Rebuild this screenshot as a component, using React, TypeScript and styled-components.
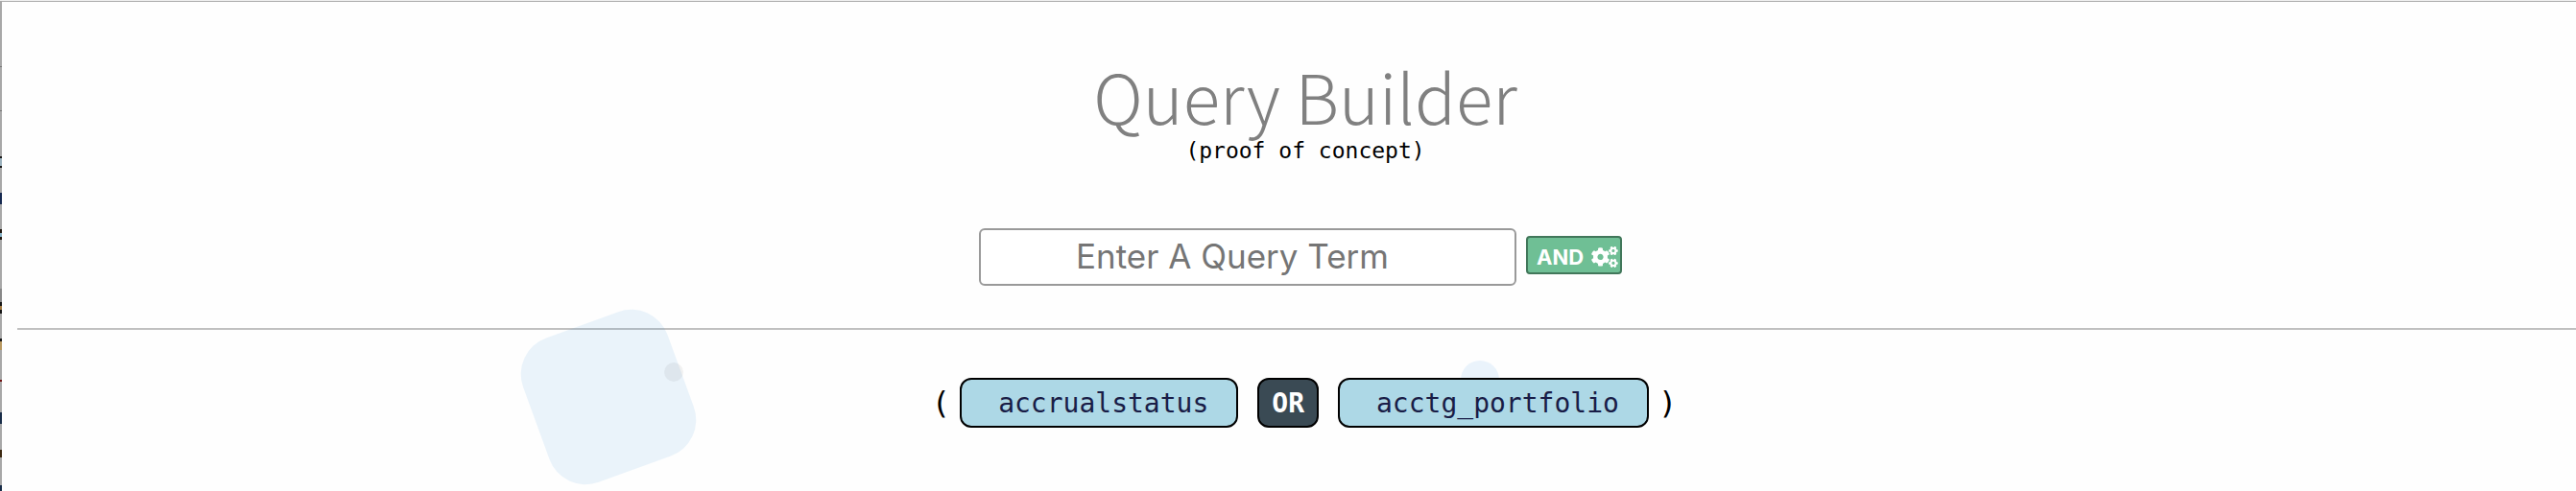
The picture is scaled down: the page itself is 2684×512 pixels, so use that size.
import React from "react";
import styled, { createGlobalStyle } from "styled-components";
import { FaCogs } from "react-icons/fa";

const GlobalStyle = createGlobalStyle`
  *, *::before, *::after { box-sizing: border-box; }
  html, body { margin: 0; background: #fefefe; }
`;

const mono = `"DejaVu Sans Mono", monospace`;
const sans = `Inter, "Liberation Sans", sans-serif`;

const Page = styled.main`
  position: relative;
  min-height: 100vh;
  overflow: hidden;
  padding-left: 18px;
  border-top: 1px solid #efefef;
  background: #fefefe;
  box-shadow: inset 0 1px 0 #b0b0b0;
`;

const WindowEdge = styled.div`
  position: absolute;
  inset: 0 auto 0 0;
  width: 2px;
  background: linear-gradient(
    #a8a8a8 0 68px, #777 68px 69px, #a8a8a8 69px 114px, #777 114px 115px,
    #a8a8a8 115px 162px, #181818 162px 164px, #9ab0bc 164px 172px, #181818 172px 174px,
    #a8a8a8 174px 200px, #15284f 200px 212px, #a8a8a8 212px 238px, #201810 238px 242px,
    #86b0c4 242px 246px, #201810 246px 249px, #a8a8a8 249px 300px, #888 300px 314px,
    #151515 314px 318px, #a07840 318px 322px, #151515 322px 326px, #a8a8a8 326px 352px,
    #181818 352px 355px, #b89860 355px 364px, #a8a8a8 364px 395px, #701010 395px 397px,
    #a8a8a8 397px 429px, #182c48 429px 441px, #a8a8a8 441px 468px, #3c2810 468px 476px,
    #a8a8a8 476px 505px, #182c48 505px 100%
  );
`;

const Header = styled.header`
  display: flex;
  flex-direction: column;
  align-items: center;
  padding: 54px 0 0 18px;
`;

const Title = styled.h1`
  margin: 0;
  color: #808080;
  font: 300 71px/88px "Noto Sans CJK JP", sans-serif;
`;

const Subtitle = styled.p`
  margin: 0;
  color: #000;
  font: 23px/28px ${mono};
`;

const TermForm = styled.form`
  display: flex;
  justify-content: center;
  align-items: center;
  gap: 10px;
  padding: 67px 0 44px 8px;
`;

const TermInput = styled.input`
  width: 560px;
  height: 60px;
  padding: 0 34px 2px 2px;
  border: 2px solid #999;
  border-radius: 6px;
  background: #fff;
  color: #222;
  font: 35px/44px ${sans};
  text-align: center;
  &::placeholder { color: #757575; opacity: 1; }
`;

const AndButton = styled.button`
  display: flex;
  align-items: center;
  justify-content: space-between;
  width: 100px;
  height: 40px;
  margin-bottom: 4px;
  padding: 4px 2px 0 9px;
  border: 2px solid #41775a;
  border-radius: 4px;
  background: #6fbf95;
  color: #fff;
  font: 700 22px/28px ${sans};
  svg { width: 28px; height: 22px; }
`;

const Divider = styled.hr`
  height: 2px;
  margin: 0;
  border: 0;
  background: #c0c0c0;
`;

const Expression = styled.section`
  position: relative;
  z-index: 1;
  display: flex;
  justify-content: center;
  align-items: center;
  gap: 20px;
  padding: 50px 0 50px 16px;
  font: 28px/32px ${mono};
`;

const Group = styled.div`
  display: flex;
  align-items: center;
  gap: 10px;
`;

const Paren = styled.span`
  font-size: 32px;
`;

const Chip = styled.button<{ $operator?: boolean }>`
  height: 52px;
  padding: ${(p) => (p.$operator ? "2px 13px 0" : "2px 29px 0 38px")};
  border: 2px solid #000;
  border-radius: 12px;
  background: ${(p) => (p.$operator ? "#3a4a54" : "#add8e6")};
  color: ${(p) => (p.$operator ? "#fff" : "#191d47")};
  font: inherit;
  font-weight: ${(p) => (p.$operator ? 700 : 400)};
`;

const Blob = styled.div<{ $x: number; $y: number; $size: number; $radius: string; $color: string; $turn?: number }>`
  position: absolute;
  left: ${(p) => p.$x}px;
  top: ${(p) => p.$y}px;
  width: ${(p) => p.$size}px;
  height: ${(p) => p.$size}px;
  border-radius: ${(p) => p.$radius};
  background: ${(p) => p.$color};
  transform: rotate(${(p) => p.$turn ?? 0}deg);
  pointer-events: none;
`;

export default function App() {
  return (
    <>
      <GlobalStyle />
      <Page>
        <WindowEdge />
        <Header>
          <Title>Query Builder</Title>
          <Subtitle>(proof of concept)</Subtitle>
        </Header>
        <TermForm onSubmit={(e) => e.preventDefault()}>
          <TermInput type="text" aria-label="Query term" placeholder="Enter A Query Term" />
          <AndButton type="button">AND <FaCogs aria-hidden="true" /></AndButton>
        </TermForm>
        <Divider />
        <Blob $x={554} $y={333} $size={160} $radius="40px" $color="rgba(60, 145, 220, 0.1)" $turn={-20} />
        <Blob $x={692} $y={377} $size={20} $radius="50%" $color="rgba(0, 0, 0, 0.05)" />
        <Blob $x={1522} $y={375} $size={40} $radius="50%" $color="#eaf3fb" />
        <Expression>
          <Group><Paren>(</Paren><Chip type="button">accrualstatus</Chip></Group>
          <Chip type="button" $operator>OR</Chip>
          <Group><Chip type="button">acctg_portfolio</Chip><Paren>)</Paren></Group>
        </Expression>
      </Page>
    </>
  );
}
